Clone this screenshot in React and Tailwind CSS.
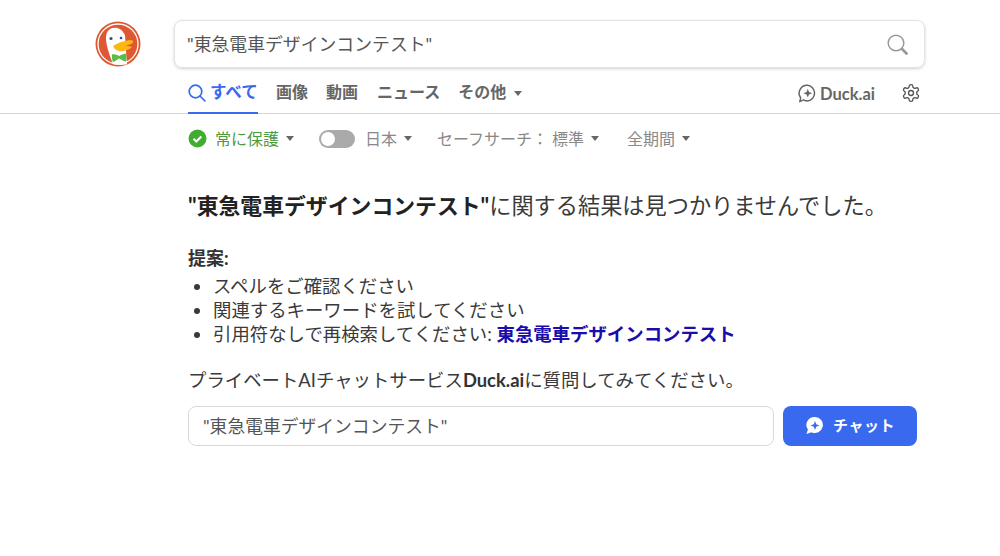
import React from 'react';

const FONT = 'font-["Lato","Noto_Sans_CJK_JP",sans-serif]';

const Caret = ({ className = '' }) => (
  <svg width="8" height="5" viewBox="0 0 8 5" className={className}>
    <path d="M0 0h8L4 5z" fill="currentColor" />
  </svg>
);

const DuckLogo = () => (
  <svg width="46" height="46" viewBox="0 0 46 46" className="shrink-0">
    <circle cx="23" cy="23" r="22.500" fill="#de5833" />
    <circle cx="23" cy="23" r="20" fill="none" stroke="#fff" strokeWidth="1.300" />
    <path d="M15 8C20 5 27 7 30 14L31 30L32 43.300C27 44.300 22 44 18 43.200C15 35 11 25 11 17C11 13 12 10 15 8z" fill="#fff" />
    <circle cx="16" cy="17.500" r="1.600" fill="#2d4f8e" />
    <circle cx="26" cy="17" r="1.300" fill="#2d4f8e" />
    <path d="M18 25C22 22 28 20 35 19C39 19 39 22 36 23L30 25C33 25 36 25 37 26C34 29 28 31 24 30C20 29 19 27 18 25z" fill="#fdb714" />
    <path d="M17 33.500C20 33 22 34 24 35C26 34 28 33 31 32.500C31.500 35 31.500 38 31 40.500C28 40 26 38.500 24 37.500C22 38.500 20 40.500 18 41C17 39 16.800 36 17 33.500z" fill="#5dbb47" />
  </svg>
);

const SearchIcon = ({ className = '' }) => (
  <svg width="21" height="21" viewBox="0 0 21 21" fill="none" className={className}>
    <circle cx="9" cy="9" r="7.800" stroke="currentColor" strokeWidth="1.500" />
    <path d="M15 15l4.500 4.500" stroke="currentColor" strokeWidth="2.800" strokeLinecap="round" />
  </svg>
);

const TabSearchIcon = () => (
  <svg width="18" height="18" viewBox="0 0 18 18" fill="none" className="text-[#3969ef]">
    <circle cx="7.500" cy="7.500" r="6.300" stroke="currentColor" strokeWidth="1.700" />
    <path d="M12 12l5 5" stroke="currentColor" strokeWidth="1.700" strokeLinecap="round" />
  </svg>
);

const ChatBubble = () => (
  <svg width="19" height="19" viewBox="0 0 19 19" fill="none" className="text-[#666]">
    <path d="M9.800 1.200a8 8 0 0 1 0 15.800c-1.600 0-3-.4-4.300-1.100L1.800 17.600l.9-3.700a8 8 0 0 1 7.100-12.700z" stroke="currentColor" strokeWidth="1.500" strokeLinejoin="round" />
    <path d="M9.800 4.800l1.200 3.200 3.200 1.200-3.200 1.200-1.200 3.200-1.200-3.200-3.200-1.200 3.200-1.200z" fill="currentColor" />
  </svg>
);

const SolidBubble = () => (
  <svg width="19" height="19" viewBox="0 0 19 19">
    <path d="M10 1a8 8 0 1 1-3.600 15.200L1.500 18l1.400-4.400A8 8 0 0 1 10 1z" fill="#fff" />
    <path d="M10 5l1.200 3.300 3.300 1.200-3.300 1.200L10 14l-1.200-3.300-3.300-1.200 3.300-1.200z" fill="#3969ef" />
  </svg>
);

const Gear = () => (
  <svg width="20" height="20" viewBox="0 0 24 24" fill="none" stroke="#555" strokeWidth="1.600" strokeLinejoin="round">
    <path d="M12.220 2h-.44a2 2 0 0 0-2 2v.18a2 2 0 0 1-1 1.730l-.43.250a2 2 0 0 1-2 0l-.15-.080a2 2 0 0 0-2.730.730l-.22.380a2 2 0 0 0 .730 2.730l.15.100a2 2 0 0 1 1 1.720v.51a2 2 0 0 1-1 1.740l-.15.090a2 2 0 0 0-.730 2.730l.22.380a2 2 0 0 0 2.730.730l.15-.080a2 2 0 0 1 2 0l.43.250a2 2 0 0 1 1 1.730V20a2 2 0 0 0 2 2h.44a2 2 0 0 0 2-2v-.18a2 2 0 0 1 1-1.730l.43-.250a2 2 0 0 1 2 0l.15.080a2 2 0 0 0 2.730-.730l.22-.390a2 2 0 0 0-.730-2.730l-.15-.080a2 2 0 0 1-1-1.740v-.5a2 2 0 0 1 1-1.740l.15-.090a2 2 0 0 0 .730-2.730l-.22-.380a2 2 0 0 0-2.730-.730l-.15.080a2 2 0 0 1-2 0l-.43-.250a2 2 0 0 1-1-1.730V4a2 2 0 0 0-2-2z" />
    <circle cx="12" cy="12" r="3" />
  </svg>
);

const query = '東急電車デザインコンテスト';

export default function App() {
  return (
    <div className={`w-[1000px] h-[556px] overflow-hidden bg-white ${FONT}`}>
      <header className="h-[114px] border-b border-[#d4d4d4] flex">
        <div className="w-[174px] shrink-0 pl-[95px] pt-[21px]">
          <DuckLogo />
        </div>
        <div className="w-[751px] flex flex-col">
          <div className="mt-[20px] h-[48px] rounded-lg border border-[#e3e3e3] shadow-[0_1px_3px_rgba(0,0,0,0.18)] flex items-center justify-between pl-[12px] pr-[16px] text-[#555]">
            <span className="text-[17.850px]">"{query}"</span>
            <SearchIcon className="text-[#999]" />
          </div>
          <nav className="flex-1 flex items-stretch justify-between pl-[14px] pr-[4px] pt-[12px]">
            <div className="flex gap-[18px] font-bold text-[16px] text-[#666]">
              <span className="w-[70px] border-b-[2px] border-[#3969ef] text-[#3969ef] flex items-start gap-[4px] -mb-px">
                <span className="mt-[4px]"><TabSearchIcon /></span>
                <span className="text-[16.500px]">すべて</span>
              </span>
              <span>画像</span>
              <span>動画</span>
              <span className="ml-[1px]">ニュース</span>
              <span className="flex items-start gap-[8px]">その他<Caret className="mt-[11px]" /></span>
            </div>
            <div className="flex items-start gap-[26px] text-[#666] mt-[3px]">
              <span className="flex items-center gap-[3px] font-bold text-[16.500px] leading-[20px]">
                <ChatBubble />
                <span className="mt-[1px]">Duck.ai</span>
              </span>
              <Gear />
            </div>
          </nav>
        </div>
      </header>

      <main className="pl-[188px]">
        <div className="h-[49px] flex items-center text-[16px] text-[#888]">
          <span className="flex items-center gap-[8px] text-[#4c9a3f]">
            <svg width="19" height="19" viewBox="0 0 19 19">
              <circle cx="9.500" cy="9.500" r="9" fill="#3fae2f" />
              <path d="M5.500 9.700l2.800 2.800 5-5" fill="none" stroke="#fff" strokeWidth="2" />
            </svg>
            常に保護
            <Caret className="text-[#666] -ml-[1px]" />
          </span>
          <span className="flex items-center gap-[10px] ml-[25px]">
            <span className="w-[36px] h-[18px] rounded-full bg-[#aaa] p-[2px] flex">
              <span className="w-[14px] h-[14px] rounded-full bg-white" />
            </span>
            日本
            <Caret className="text-[#666] -ml-[3px]" />
          </span>
          <span className="flex items-center gap-[7px] ml-[25px]">
            <span>セーフサーチ：<span className="ml-[4px]">標準</span></span>
            <Caret className="text-[#666]" />
          </span>
          <span className="flex items-center gap-[7px] ml-[28px]">全期間<Caret className="text-[#666]" /></span>
        </div>

        <h1 className="mt-[27px] text-[22.200px] leading-[32px] text-[#3a3a3a]">
          <b className="font-bold text-[21.850px] text-[#222]">"{query}"</b>に関する結果は見つかりませんでした。
        </h1>

        <div className="mt-[24px] text-[18.400px] leading-[24px] text-[#3a3a3a]">
          <p className="font-bold text-[18px] text-[#333] mb-[4px]">提案:</p>
          <ul className="list-disc pl-[25px]">
            <li>スペルをご確認ください</li>
            <li>関連するキーワードを試してください</li>
            <li>引用符なしで再検索してください: <a className="font-bold text-[#1a0dab]">{query}</a></li>
          </ul>
        </div>

        <p className="mt-[22px] text-[18.400px] leading-[24px] text-[#3a3a3a]">
          プライベートAIチャットサービス<b className="font-bold text-[#333]">Duck.ai</b>に質問してみてください。
        </p>

        <div className="mt-[14px] flex gap-[9px]">
          <div className="w-[586px] h-[40px] rounded-lg border border-[#d9d9d9] flex items-center pl-[14px] text-[17.800px] text-[#555]">
            "{query}"
          </div>
          <button className="w-[134px] h-[40px] rounded-lg bg-[#3969ef] text-white font-bold text-[15px] tracking-[0.5px] flex items-center justify-center gap-[9px] pb-[1px]">
            <SolidBubble />チャット
          </button>
        </div>
      </main>
    </div>
  );
}
